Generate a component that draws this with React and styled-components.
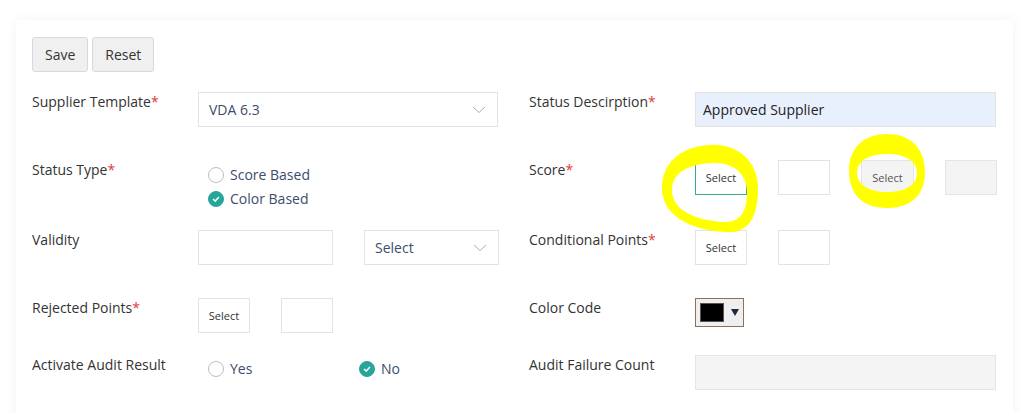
import React from 'react'
import styled, { createGlobalStyle } from 'styled-components'

const GlobalStyle = createGlobalStyle`
    body {
        margin: 0;
        background: #fff;
        font-family: "Open Sans", "Liberation Sans", sans-serif;
        font-size: 14px;
        color: #333;
    }
`

const Page = styled.div`
    position: relative;
    padding: 20px 22px 0 16px;
    height: 413px;
    box-sizing: border-box;
    overflow: hidden;
`

const Card = styled.div`
    background: #fff;
    box-shadow: 0 0 12px rgba(0, 0, 0, 0.05);
    padding: 17px 17px 40px 16px;
    min-height: 420px;
    box-sizing: border-box;
`

const Toolbar = styled.div`
    display: flex;
    gap: 4px;
    margin-bottom: 20px;
`

const Button = styled.button`
    height: 35px;
    padding: 0 12px;
    background: #f0f0f0;
    border: 1px solid #d9d9d9;
    border-radius: 3px;
    font-family: inherit;
    font-size: 14px;
    color: #333;
`

const Row = styled.div`
    display: grid;
    grid-template-columns: 466px 467px;
    column-gap: 31px;
    height: ${p => p.h}px;
`

const Field = styled.div`
    display: grid;
    grid-template-columns: 166px 1fr;
    align-items: start;
`

const Label = styled.div`
    line-height: 20px;
    color: #333;
    span { color: #e53935; }
`

const Controls = styled.div`
    display: flex;
    gap: 31px;
    align-items: flex-start;
`

const Box = styled.div`
    box-sizing: border-box;
    height: 35px;
    width: ${p => p.w ? `${p.w}px` : '100%'};
    border: 1px solid ${p => p.focus ? '#3aa893' : p.disabled ? '#e5e5e5' : '#e3e3e3'};
    background: ${p => p.fill || (p.disabled ? '#f4f4f4' : '#fff')};
    display: flex;
    align-items: center;
    padding: 0 10px;
    color: #3c4d6b;
    font-size: 14px;
`

const SelectBox = styled(Box)`
    justify-content: space-between;
    svg { margin-right: 1px; }
`

const SmallSelect = styled(Box)`
    justify-content: center;
    padding: 0;
    font-size: 11px;
    color: ${p => p.disabled ? '#555' : '#333'};
`

const RadioGroup = styled.div`
    display: grid;
    grid-template-columns: ${p => p.cols || '1fr'};
    row-gap: 4px;
    padding-left: 10px;
    margin-top: ${p => p.mt || 0}px;
`

const RadioItem = styled.label`
    display: flex;
    align-items: center;
    gap: 6px;
    line-height: 20px;
    color: #3c4d6b;
`

const Circle = styled.span`
    box-sizing: border-box;
    width: 16px;
    height: 16px;
    border-radius: 50%;
    border: 1px solid ${p => p.on ? '#26a69a' : '#bdbdbd'};
    background: ${p => p.on ? '#26a69a' : '#fff'};
    display: flex;
    align-items: center;
    justify-content: center;
`

const ColorPicker = styled.div`
    box-sizing: border-box;
    width: 49px;
    height: 29px;
    border: 1px solid #8b7157;
    background: #efefef;
    display: flex;
    align-items: center;
    padding: 0 0 0 4px;
    gap: 7px;
`

const Swatch = styled.div`
    width: 24px;
    height: 19px;
    background: #000;
    border: 1px solid #555;
    box-sizing: border-box;
`

const Arrow = styled.div`
    width: 0;
    height: 0;
    border-left: 4px solid transparent;
    border-right: 4px solid transparent;
    border-top: 7px solid #1e2a3a;
`

const Marks = styled.svg`
    position: absolute;
    left: 0;
    top: 0;
    pointer-events: none;
`

const Chevron = () => (
    <svg width="14" height="8" viewBox="0 0 14 8">
        <path d="M1 1 L7 6.5 L13 1" fill="none" stroke="#a8adb5" strokeWidth="1" />
    </svg>
)

const Radio = ({ on, children }) => (
    <RadioItem>
        <Circle on={on}>
            {on && (
                <svg width="8" height="6" viewBox="0 0 8 6">
                    <path d="M1 3 L3.2 5 L7 1" fill="none" stroke="#fff" strokeWidth="1.6" />
                </svg>
            )}
        </Circle>
        {children}
    </RadioItem>
)

const Req = () => <span>*</span>

const App = () => (
    <Page>
        <GlobalStyle />
        <Card>
            <Toolbar>
                <Button>Save</Button>
                <Button>Reset</Button>
            </Toolbar>

            <Row h={68}>
                <Field>
                    <Label>Supplier Template<Req /></Label>
                    <SelectBox>VDA 6.3<Chevron /></SelectBox>
                </Field>
                <Field>
                    <Label>Status Descirption<Req /></Label>
                    <Box fill="#e8f0fe" style={{ color: '#222', paddingLeft: 7 }}>Approved Supplier</Box>
                </Field>
            </Row>

            <Row h={70}>
                <Field>
                    <Label>Status Type<Req /></Label>
                    <RadioGroup mt={5}>
                        <Radio>Score Based</Radio>
                        <Radio on>Color Based</Radio>
                    </RadioGroup>
                </Field>
                <Field>
                    <Label>Score<Req /></Label>
                    <Controls>
                        <SmallSelect w={52} focus>Select</SmallSelect>
                        <Box w={52} />
                        <SmallSelect w={53} disabled>Select</SmallSelect>
                        <Box w={52} disabled />
                    </Controls>
                </Field>
            </Row>

            <Row h={68}>
                <Field>
                    <Label>Validity</Label>
                    <Controls>
                        <Box w={135} />
                        <SelectBox w={135}>Select<Chevron /></SelectBox>
                    </Controls>
                </Field>
                <Field>
                    <Label>Conditional Points<Req /></Label>
                    <Controls>
                        <SmallSelect w={52}>Select</SmallSelect>
                        <Box w={52} />
                    </Controls>
                </Field>
            </Row>

            <Row h={57}>
                <Field>
                    <Label>Rejected Points<Req /></Label>
                    <Controls>
                        <SmallSelect w={52}>Select</SmallSelect>
                        <Box w={52} />
                    </Controls>
                </Field>
                <Field>
                    <Label>Color Code</Label>
                    <ColorPicker>
                        <Swatch />
                        <Arrow />
                    </ColorPicker>
                </Field>
            </Row>

            <Row h={40}>
                <Field>
                    <Label>Activate Audit Result</Label>
                    <RadioGroup cols="151px auto" mt={4}>
                        <Radio>Yes</Radio>
                        <Radio on>No</Radio>
                    </RadioGroup>
                </Field>
                <Field>
                    <Label>Audit Failure Count</Label>
                    <Box disabled />
                </Field>
            </Row>
        </Card>

        <Marks width="1035" height="413" viewBox="0 0 1035 413">
            <path
                fill="#ffff00"
                fillRule="evenodd"
                d="M710 145 C740 143 760 165 758 192 C757 222 745 234 725 232 C690 230 660 215 662 185 C664 160 684 146 710 145 Z
                   M712 163 C735 162 748 175 747 195 C746 215 738 223 722 222 C695 220 672 210 672 190 C672 172 690 164 712 163 Z"
            />
            <path
                fill="#ffff00"
                fillRule="evenodd"
                d="M887 134 C912 134 925 150 925 172 C925 196 910 208 887 208 C862 208 849 194 849 170 C849 148 864 134 887 134 Z
                   M887 154 C907 154 917 162 917 173 C917 185 905 192 887 192 C868 192 857 184 857 173 C857 161 869 154 887 154 Z"
            />
        </Marks>
    </Page>
)

export default App
